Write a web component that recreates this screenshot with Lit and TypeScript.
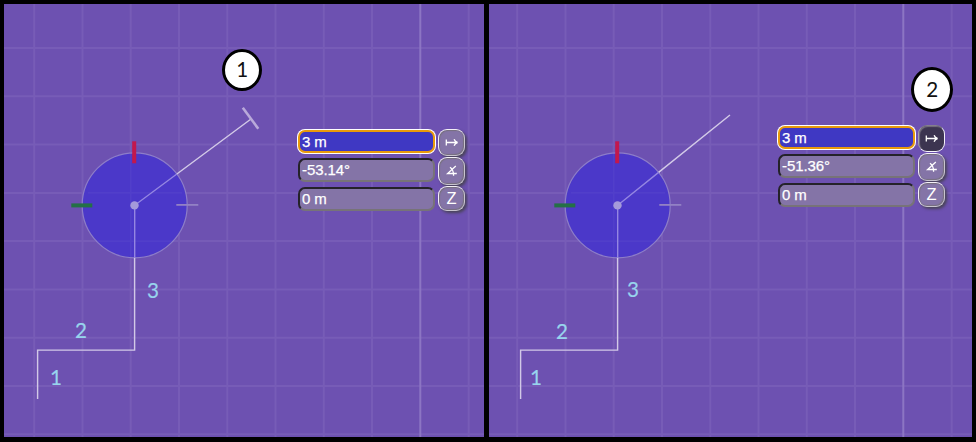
import { LitElement, html, svg, css } from "lit";
import { customElement, property } from "lit/decorators.js";
import { classMap } from "lit/directives/class-map.js";

interface Label { text: string; x: number; y: number; }

const COLUMNS = [34.2, 82.5, 130.7, 179, 227.3, 275.5, 323.8, 372, 468.7];
const ROWS = [48, 96.3, 144.5, 192.9, 241.1, 289.4, 337.7, 386, 434.3];

@customElement("tool-button")
class ToolButton extends LitElement {
  @property() icon = "distance";
  @property({ type: Boolean }) active = false;

  static styles = css`
    :host { display: block; height: 100%; }
    .button {
      box-sizing: border-box;
      width: 100%;
      height: 100%;
      display: grid;
      place-items: center;
      border: 1.4px solid;
      border-color: #f4f0f8 #c8c4cf #c8c4cf #f4f0f8;
      border-radius: 9px;
      background: #8474a7;
      box-shadow: 2px 2px 3px #494459, inset -1px -1px 1px #77717f, inset 1px 1px 1px #77717f;
      color: #fff;
      font: 16.5px "Liberation Sans", Arial, sans-serif;
      -webkit-text-stroke: 0;
    }
    .active {
      background: #3c3450;
      border-color: #85808d #f3eff8 #f8f6fb #a5a0ad;
      box-shadow: inset 1px 1px 1px #77717f;
    }
    svg { display: block; width: 16px; height: 16px; fill: none; stroke: #fff; stroke-width: 1.3; }
  `;

  glyph() {
    if (this.icon === "axis") return html`<span>Z</span>`;
    if (this.icon === "angle") {
      return html`<svg viewBox="0 0 16 16"><path d="M11.8 3 3.6 10.5H12.8M6 4.2Q9.8 6.8 9.6 12.8" /></svg>`;
    }
    return html`<svg viewBox="0 0 16 16"><path d="M2.3 4.5V10.5M2.3 7.5H13.3M10.1 4.3Q11 7 13.6 7.5Q11 8 10.1 10.7" /></svg>`;
  }

  render() {
    return html`<div class=${classMap({ button: true, active: this.active })}>${this.glyph()}</div>`;
  }
}

@customElement("value-panel")
class ValuePanel extends LitElement {
  @property() angle = "";
  @property({ type: Boolean }) locked = false;

  static styles = css`
    :host {
      display: grid;
      grid-template-columns: 137px 27px;
      grid-template-rows: 27px 28px 25px;
      column-gap: 3px;
      row-gap: 1px;
      align-items: center;
      font: 15px "Liberation Sans", Arial, sans-serif;
      letter-spacing: -0.1px;
      -webkit-text-stroke: 0.25px #fff;
      color: #fff;
    }
    .field {
      box-sizing: border-box;
      height: 24px;
      line-height: 19px;
      padding-left: 2px;
      border: 2px solid;
      border-color: #242229 #777378 #777378 #242229;
      border-radius: 7px;
      background: #8474a7;
      white-space: pre;
      margin-top: -2px;
    }
    .focused {
      height: 23px;
      line-height: 20px;
      margin-top: -2px;
      border-color: #e89a0c;
      background: #3f38c3;
      box-shadow: 0 0 0 1px #fff;
    }
    .last { margin-top: 0; }
  `;

  render() {
    return html`
      <div class="field focused">3 m</div>
      <tool-button icon="distance" ?active=${this.locked}></tool-button>
      <div class="field">${this.angle}</div>
      <tool-button icon="angle"></tool-button>
      <div class="field last">0 m</div>
      <tool-button icon="axis"></tool-button>
    `;
  }
}

@customElement("drawing-view")
class DrawingView extends LitElement {
  @property({ type: Number }) origin = 4;
  @property({ type: Number }) extent = 480;
  @property({ attribute: false }) labels: Label[] = [];
  @property({ attribute: false }) tip = [251, 119];
  @property({ type: Boolean }) capped = false;

  static styles = css`
    :host { display: block; background: #6d51b1; overflow: hidden; }
    svg { display: block; width: 100%; height: 100%; }
    .grid { stroke: #775cb7; stroke-width: 2; }
    .major { stroke: #8c75c3; stroke-width: 2; }
    .disc { fill: #4b38c9; stroke: #8d7dc8; stroke-width: 1.2; }
    .faint { stroke: #ffffff; stroke-opacity: .035; stroke-width: 1.8; }
    .path { fill: none; stroke: #d2c9e7; stroke-width: 1.45; }
    .inner { fill: none; stroke: #9486e2; stroke-width: 1.4; }
    .cap { stroke: #b9a9da; stroke-width: 2.6; }
    .dot { fill: #a59ada; }
    .north { stroke: #c2184d; stroke-width: 4; }
    .west { stroke: #247046; stroke-width: 4; }
    .east { stroke: #9281c4; stroke-width: 1.8; }
    .label {
      font: 21.5px Lato, sans-serif;
      fill: #98d4ed;
      stroke: #98d4ed;
      stroke-width: 0.2;
      text-anchor: middle;
      transform-box: fill-box;
      transform-origin: center;
      transform: scaleX(0.96);
    }
  `;

  render() {
    const cx = 134.7, cy = 205.3, r = 52.5;
    const [tx, ty] = this.tip;
    const d = Math.hypot(tx - cx, ty - cy);
    const ex = cx + ((tx - cx) * r) / d;
    const ey = cy + ((ty - cy) * r) / d;
    return html`
      <svg viewBox="${this.origin} 4 ${this.extent} 433">
        ${COLUMNS.map((x) => svg`<path class="grid" d="M${x} 0V442" />`)}
        ${ROWS.map((y) => svg`<path class="grid" d="M0 ${y}H500" />`)}
        <path class="major" d="M420.3 0V442" />
        <circle class="disc" cx=${cx} cy=${cy} r=${r} />
        <path class="faint" d="M130.7 153V257M88 192.9H182M96 241.1H174" />
        <path class="path" d="M37.6 399V350.1H134.6V257.8M${ex} ${ey}L${tx} ${ty}" />
        <path class="inner" d="M134.7 257.8V205.3L${ex} ${ey}" />
        ${this.capped ? svg`<path class="cap" d="M242.8 107.8L258.3 128.8" />` : ""}
        <path class="north" d="M134.2 141.3V163.3" />
        <path class="west" d="M71.3 205.4H92.3" />
        <path class="east" d="M176.3 204.9H198.3" />
        <circle class="dot" cx="134.5" cy="205.4" r="4.2" />
        ${this.labels.map((l) => svg`<text class="label" x=${l.x} y=${l.y}>${l.text}</text>`)}
      </svg>
    `;
  }
}

@customElement("app-root")
class AppRoot extends LitElement {
  static styles = css`
    :host {
      box-sizing: border-box;
      width: 976px;
      height: 442px;
      display: grid;
      grid-template-columns: 480px 483px;
      gap: 5px;
      padding: 4px 4px 5px;
      background: #000;
      overflow: hidden;
    }
    .pane { position: relative; height: 433px; }
    drawing-view { height: 433px; }
    value-panel { position: absolute; }
    .first value-panel { left: 294px; top: 125px; }
    .second value-panel { left: 289px; top: 121px; }
    .step {
      position: absolute;
      box-sizing: border-box;
      display: grid;
      place-items: center;
      border: 3px solid #000;
      border-radius: 50%;
      background: #fff;
      color: #111;
      font: 21.5px/1 Lato, sans-serif;
    }
    .step span { transform: scaleX(0.96); }
    .first .step { left: 218px; top: 45px; width: 40px; height: 42px; }
    .second .step { left: 422px; top: 63px; width: 42px; height: 45px; }
  `;

  render() {
    return html`
      <section class="pane first">
        <drawing-view
          .origin=${4} .extent=${480} .tip=${[251, 119]} capped
          .labels=${[
            { text: "1", x: 56, y: 385 },
            { text: "2", x: 81, y: 338 },
            { text: "3", x: 153, y: 298 },
          ]}
        ></drawing-view>
        <value-panel angle="-53.14°"></value-panel>
        <div class="step"><span>1</span></div>
      </section>
      <section class="pane second">
        <drawing-view
          .origin=${6} .extent=${483} .tip=${[247, 115]}
          .labels=${[
            { text: "1", x: 53, y: 385 },
            { text: "2", x: 79, y: 339 },
            { text: "3", x: 150, y: 297 },
          ]}
        ></drawing-view>
        <value-panel angle="-51.36°" locked></value-panel>
        <div class="step"><span>2</span></div>
      </section>
    `;
  }
}
